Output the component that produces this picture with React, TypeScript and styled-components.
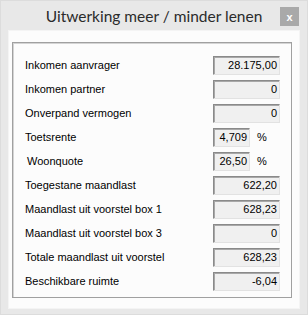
import React from "react";
import styled, { createGlobalStyle } from "styled-components";

const GlobalStyle = createGlobalStyle`
  html, body {
    margin: 0;
    padding: 0;
    background: #e8e8e8;
  }
`;

const Window = styled.div`
  width: 308px;
  height: 315px;
  box-sizing: border-box;
  background: #e8e8e8;
  border: 1px solid #dcdcdc;
  display: flex;
  flex-direction: column;
`;

const TitleBar = styled.div`
  height: 29px;
  display: grid;
  grid-template-columns: 1fr auto 1fr;
  align-items: center;
`;

const Title = styled.div`
  grid-column: 2;
  font-family: Lato, "Noto Sans", sans-serif;
  font-size: 15.5px;
  color: #2b2b2b;
  white-space: nowrap;
  margin-top: 1px;
`;

const CloseButton = styled.div`
  grid-column: 3;
  justify-self: end;
  margin-right: 8px;
  margin-top: 2px;
  width: 19px;
  height: 19px;
  background: #a9a9a9;
  color: #fff;
  font-family: "Liberation Sans", Arial, sans-serif;
  font-size: 11px;
  font-weight: bold;
  display: flex;
  align-items: center;
  justify-content: center;
`;

const Panel = styled.div`
  flex: 1;
  margin: 0 7px 5px 7px;
  background: #fcfcfc;
  border: 1px solid #f4f4f4;
  padding: 11px 7px 10px 3px;
  display: flex;
`;

const GroupBox = styled.div`
  flex: 1;
  border: 1px solid #a0a0a0;
  box-shadow: inset 1px 1px 0 #d4d4d4;
  padding: 10px 11px 0 12px;
  display: flex;
  flex-direction: column;
`;

const Row = styled.div`
  height: 24px;
  flex-shrink: 0;
  display: flex;
  align-items: center;
  justify-content: space-between;
`;

const Label = styled.span<{ $indent?: boolean }>`
  font-family: "Liberation Sans", Arial, sans-serif;
  font-size: 11px;
  color: #000;
  padding-left: ${(p) => (p.$indent ? "2px" : "0")};
`;

const FieldGroup = styled.div`
  width: 67px;
  display: flex;
  align-items: center;
  gap: 7px;
`;

const Field = styled.div<{ $narrow?: boolean }>`
  box-sizing: border-box;
  width: ${(p) => (p.$narrow ? "37px" : "67px")};
  height: 19px;
  background: #f0f0f0;
  border-style: solid;
  border-width: 1px;
  border-color: #8a8a8a #e2e2e2 #e2e2e2 #8a8a8a;
  box-shadow: inset 1px 1px 0 #a8a8a8;
  font-family: "Liberation Sans", Arial, sans-serif;
  font-size: 11px;
  color: #000;
  display: flex;
  align-items: center;
  justify-content: flex-end;
  padding-right: 2px;
`;

const Unit = styled.span`
  font-family: "Liberation Sans", Arial, sans-serif;
  font-size: 11px;
  color: #000;
`;

type Line = { label: string; value: string; percent?: boolean; indent?: boolean };

const lines: Line[] = [
  { label: "Inkomen aanvrager", value: "28.175,00" },
  { label: "Inkomen partner", value: "0" },
  { label: "Onverpand vermogen", value: "0" },
  { label: "Toetsrente", value: "4,709", percent: true },
  { label: "Woonquote", value: "26,50", percent: true, indent: true },
  { label: "Toegestane maandlast", value: "622,20" },
  { label: "Maandlast uit voorstel box 1", value: "628,23" },
  { label: "Maandlast uit voorstel box 3", value: "0" },
  { label: "Totale maandlast uit voorstel", value: "628,23" },
  { label: "Beschikbare ruimte", value: "-6,04" },
];

export default function App() {
  return (
    <>
      <GlobalStyle />
      <Window>
        <TitleBar>
          <Title>Uitwerking meer / minder lenen</Title>
          <CloseButton>x</CloseButton>
        </TitleBar>
        <Panel>
          <GroupBox>
            {lines.map((l) => (
              <Row key={l.label}>
                <Label $indent={l.indent}>{l.label}</Label>
                <FieldGroup>
                  <Field $narrow={l.percent}>{l.value}</Field>
                  {l.percent && <Unit>%</Unit>}
                </FieldGroup>
              </Row>
            ))}
          </GroupBox>
        </Panel>
      </Window>
    </>
  );
}
